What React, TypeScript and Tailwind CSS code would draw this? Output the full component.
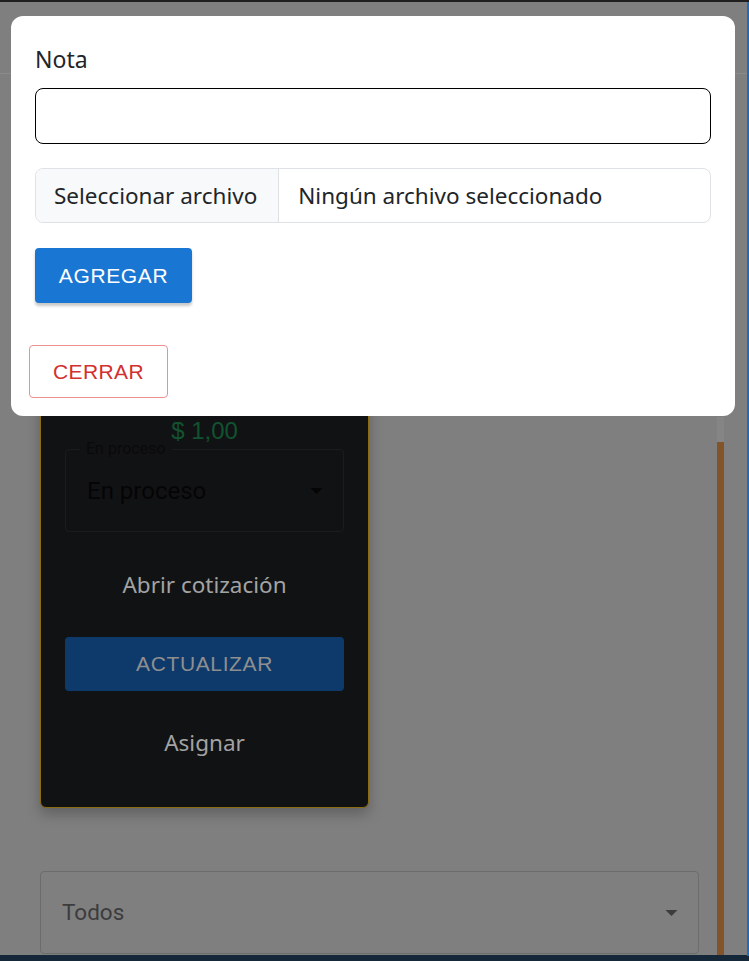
import { ChevronDown } from 'lucide-react';

// Background page (dimmed by the modal backdrop) + the "Nota" dialog on top.

function Caret({ className }: { className?: string }) {
  return (
    <svg viewBox="0 0 10 5" className={className} fill="currentColor">
      <path d="M0 0 L10 0 L5 5 Z" />
    </svg>
  );
}

function BackgroundPage() {
  return (
    <div className="flex h-full w-full flex-col bg-[#7f7f80]">
      <div className="h-[2px] w-full bg-[#1f1f1f]" />
      <div className="h-[72px] w-full border-b border-[#8b8b8b]" />

      <div className="flex flex-1 pl-[40px]">
        <div className="flex w-[659px] flex-col">
          {/* card */}
          <div className="mt-[26px] flex h-[708px] w-[329px] flex-col items-center rounded-[6px] border border-[#8a6c12] bg-[#111214] px-[24px] pb-[16px] shadow-[0_6px_14px_rgba(0,0,0,0.25)]">
            <div className="flex-1" />
            <div className="font-['Liberation_Sans',sans-serif] text-[24px] leading-[32px] text-[#125230]">$ 1,00</div>
            <div className="relative mt-[2px] h-[83px] w-full rounded-[4px] border border-[#1b1c1f]">
              <span className="absolute -top-[11px] left-[14px] bg-[#111214] px-[6px] font-['Roboto',sans-serif] text-[16px] leading-[20px] text-[#0a0a0b]">
                En proceso
              </span>
              <div className="flex h-full items-center justify-between pl-[21px] pr-[20px]">
                <span className="font-['Roboto',sans-serif] text-[24px] text-[#050506]">En proceso</span>
                <Caret className="h-[6px] w-[13px] text-[#050506]" />
              </div>
            </div>
            <div className="mt-[38px] font-['Noto_Sans',sans-serif] text-[22.5px] leading-[30px] text-[#a3a3a4]">Abrir cotización</div>
            <div className="mt-[37px] flex h-[54px] w-full items-center justify-center rounded-[4px] bg-[#0d3a6a] font-['Liberation_Sans',sans-serif] text-[21px] tracking-[0.03em] text-[#8f8f90]">
              ACTUALIZAR
            </div>
            <div className="mt-[37px] font-['Noto_Sans',sans-serif] text-[22.5px] leading-[30px] text-[#a3a3a4]">Asignar</div>
            <div className="h-[33px]" />
          </div>

          {/* filter select */}
          <div className="mt-[63px] flex h-[83px] w-[659px] items-center justify-between rounded-[4px] border border-[#6c6c6d] pl-[21px] pr-[20px]">
            <span className="font-['Roboto',sans-serif] text-[22.5px] text-[#3c3c3d]">Todos</span>
            <Caret className="h-[6px] w-[13px] text-[#3c3c3d]" />
          </div>
        </div>

        {/* scroll indicator */}
        <div className="ml-[18px] flex w-[7px] flex-col pt-[343px]">
          <div className="h-[25px] bg-[#858586]" />
          <div className="flex-1 bg-[#83542a]" />
        </div>
      </div>
      <div className="h-[6px] w-full bg-[#15283a]" />
    </div>
  );
}

export default function App() {
  return (
    <div className="relative h-[961px] w-full overflow-hidden">
      <BackgroundPage />
      <div className="absolute right-0 top-[2px] h-[954px] w-[2px] bg-[#1c6dbe]" />

      {/* dialog */}
      <div className="absolute left-[11px] top-[16px] flex h-[400px] w-[724px] flex-col rounded-[12px] bg-white px-[24px] pt-[28px] font-['Noto_Sans',sans-serif]">
        <label className="text-[23px] leading-[30px] text-[#212529]">Nota</label>
        <input className="mt-[14px] h-[56px] w-full rounded-[8px] border border-black px-[16px] outline-none" />

        <div className="mt-[24px] flex h-[55px] w-full overflow-hidden rounded-[8px] border border-[#dee2e6] text-[22.5px] text-[#212529]">
          <div className="flex items-center border-r border-[#dee2e6] bg-[#f8f9fa] pl-[18px] pr-[21px]">Seleccionar archivo</div>
          <div className="flex items-center px-[19px]">Ningún archivo seleccionado</div>
        </div>

        <div className="mt-[25px]">
          <button className="flex h-[55px] w-[157px] items-center justify-center rounded-[4px] bg-[#1976d2] font-['Liberation_Sans',sans-serif] text-[21px] tracking-[0.03em] text-white shadow-[0_3px_3px_rgba(0,0,0,0.22)]">
            AGREGAR
          </button>
        </div>

        <div className="-ml-[6px] mt-[42px]">
          <button className="flex h-[53px] w-[139px] items-center justify-center rounded-[4px] border border-[#ec9090] font-['Liberation_Sans',sans-serif] text-[21px] tracking-[0.02em] text-[#d32f2f]">
            CERRAR
          </button>
        </div>
      </div>
      <span className="hidden">
        <ChevronDown />
      </span>
    </div>
  );
}
